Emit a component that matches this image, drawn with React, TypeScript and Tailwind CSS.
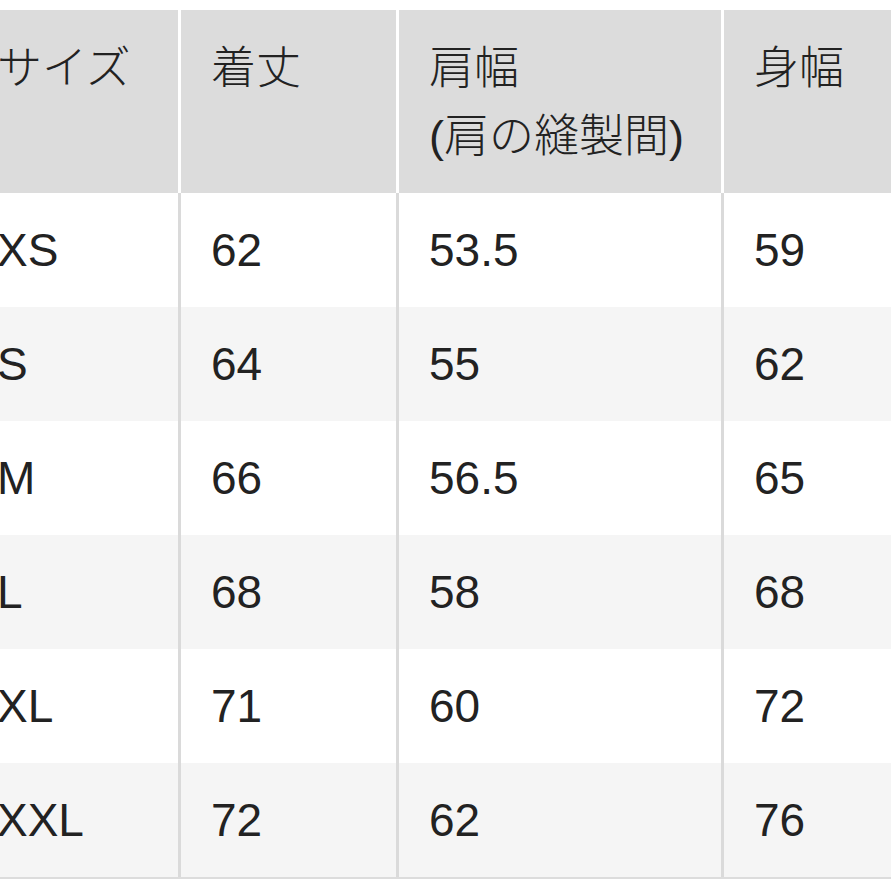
const headers = [
  ["サイズ"],
  ["着丈"],
  ["肩幅", "(肩の縫製間)"],
  ["身幅"],
];

const rows = [
  ["XS", "62", "53.5", "59"],
  ["S", "64", "55", "62"],
  ["M", "66", "56.5", "65"],
  ["L", "68", "58", "68"],
  ["XL", "71", "60", "72"],
  ["XXL", "72", "62", "76"],
];

const cols = "grid grid-cols-[211px_215px_322px_1fr] gap-x-[3px]";

const App = () => {
  return (
    <div
      className="w-[891px] h-[891px] overflow-hidden bg-white text-[#222222]"
      style={{ fontFamily: '"Liberation Sans", "Noto Sans CJK JP", sans-serif' }}
    >
      <div className="ml-[-33px] w-[960px] pt-[10px]">
        {/* header */}
        <div className={`${cols} bg-white`}>
          {headers.map((h, i) => (
            <div key={i} className="h-[183px] bg-[#dcdcdc] pl-[30px] pt-[25px] text-[45px] leading-[68px] font-light">
              {h.map((line) => (
                <div key={line} className="whitespace-nowrap">{line}</div>
              ))}
            </div>
          ))}
        </div>

        {/* body */}
        <div className="border-b-2 border-[#dcdcdc]">
          {rows.map((r, ri) => (
            <div key={ri} className={`${cols} bg-[#dadada]`}>
              {r.map((c, ci) => (
                <div
                  key={ci}
                  className={`h-[114px] flex items-center pl-[30px] text-[46px] ${
                    ri % 2 === 0 ? "bg-white" : "bg-[#f5f5f5]"
                  }`}
                >
                  {c}
                </div>
              ))}
            </div>
          ))}
        </div>
      </div>
    </div>
  );
};

export default App;
